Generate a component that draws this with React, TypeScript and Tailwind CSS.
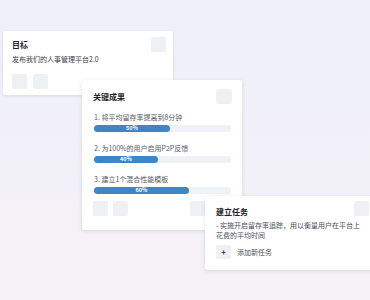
const font = { fontFamily: '"Noto Sans CJK SC", "Noto Sans", sans-serif' };

interface KeyResult {
  label: string;
  percent: string;
  fill: string;
}

const results: KeyResult[] = [
  { label: '1. 将平均留存率提高到8分钟', percent: '50%', fill: 'w-[76px]' },
  { label: '2. 为100%的用户启用P2P反馈', percent: '40%', fill: 'w-[64px]' },
  { label: '3. 建立1个混合性能模板', percent: '60%', fill: 'w-[95px]' },
];

function Square({ className = '' }: { className?: string }) {
  return <div className={`h-[15px] w-[15px] rounded-[2px] bg-[#eef1f4] ${className}`} />;
}

function ProgressRow({ item }: { item: KeyResult }) {
  return (
    <div className="flex flex-col gap-[3px]">
      <div className="text-[7px] leading-[10px] text-[#555b63]">{item.label}</div>
      <div className="h-[7px] w-[137px] rounded-full bg-[#eef1f5]">
        <div
          className={`flex h-[7px] items-center justify-center rounded-full bg-[#3f86c8] text-[5.5px] font-semibold leading-none text-white ${item.fill}`}
        >
          {item.percent}
        </div>
      </div>
    </div>
  );
}

export default function App() {
  return (
    <div
      className="relative h-[300px] w-[370px] overflow-hidden bg-gradient-to-b from-[#eef0fa] to-[#f6f1f6]"
      style={font}
    >
      {/* Objective card */}
      <div className="absolute left-[3px] top-[31px] flex h-[64px] w-[170px] flex-col rounded-[3px] bg-white pl-[9px] pr-[7px] pt-[6px] shadow-[0_1px_3px_rgba(60,60,90,0.12)]">
        <div className="flex items-start justify-between">
          <div className="flex flex-col gap-[4px] pt-[3px]">
            <div className="text-[8px] font-bold leading-[10px] text-[#1f2328]">目标</div>
            <div className="text-[7px] leading-[10px] text-[#3b4047]">发布我们的人事管理平台2.0</div>
          </div>
          <Square className="w-[14px]" />
        </div>
        <div className="mt-auto mb-[6px] flex gap-[6px]">
          <Square />
          <Square />
        </div>
      </div>

      {/* Key results card */}
      <div className="absolute left-[82px] top-[80px] flex h-[150px] w-[160px] flex-col rounded-[3px] bg-white pl-[11px] pr-[10px] pt-[9px] shadow-[0_1px_4px_rgba(60,60,90,0.14)]">
        <div className="flex items-start justify-between">
          <div className="pt-[3px] text-[8px] font-bold leading-[10px] text-[#1f2328]">关键成果</div>
          <Square className="w-[16px]" />
        </div>
        <div className="mt-[8px] flex flex-col gap-[11px] pl-[1px]">
          {results.map(item => (
            <ProgressRow key={item.label} item={item} />
          ))}
        </div>
        <div className="mt-auto mb-[14px] flex gap-[5px]">
          <Square />
          <Square />
          <Square className="ml-[57px]" />
        </div>
      </div>

      {/* Task card */}
      <div className="absolute left-[205px] top-[196px] flex h-[74px] w-[175px] flex-col rounded-[3px] bg-white pl-[11px] pr-[11px] pt-[5px] shadow-[0_1px_4px_rgba(60,60,90,0.14)]">
        <div className="flex items-start justify-between">
          <div className="pt-[6px] text-[8px] font-bold leading-[10px] text-[#1f2328]">建立任务</div>
          <Square className="w-[14px]" />
        </div>
        <div className="mt-[3px] text-[7px] leading-[10px] text-[#4a5058]">
          - 实施开启留存率追踪，用以衡量用户在平台上
          <br />
          花费的平均时间
        </div>
        <div className="mt-[5px] flex items-center gap-[6px]">
          <div className="flex h-[14px] w-[15px] items-center justify-center rounded-[2px] bg-[#eef1f4] text-[8px] font-bold leading-none text-[#2b2f35]">
            +
          </div>
          <div className="text-[7px] leading-[10px] text-[#4a5058]">添加新任务</div>
        </div>
      </div>
    </div>
  );
}
